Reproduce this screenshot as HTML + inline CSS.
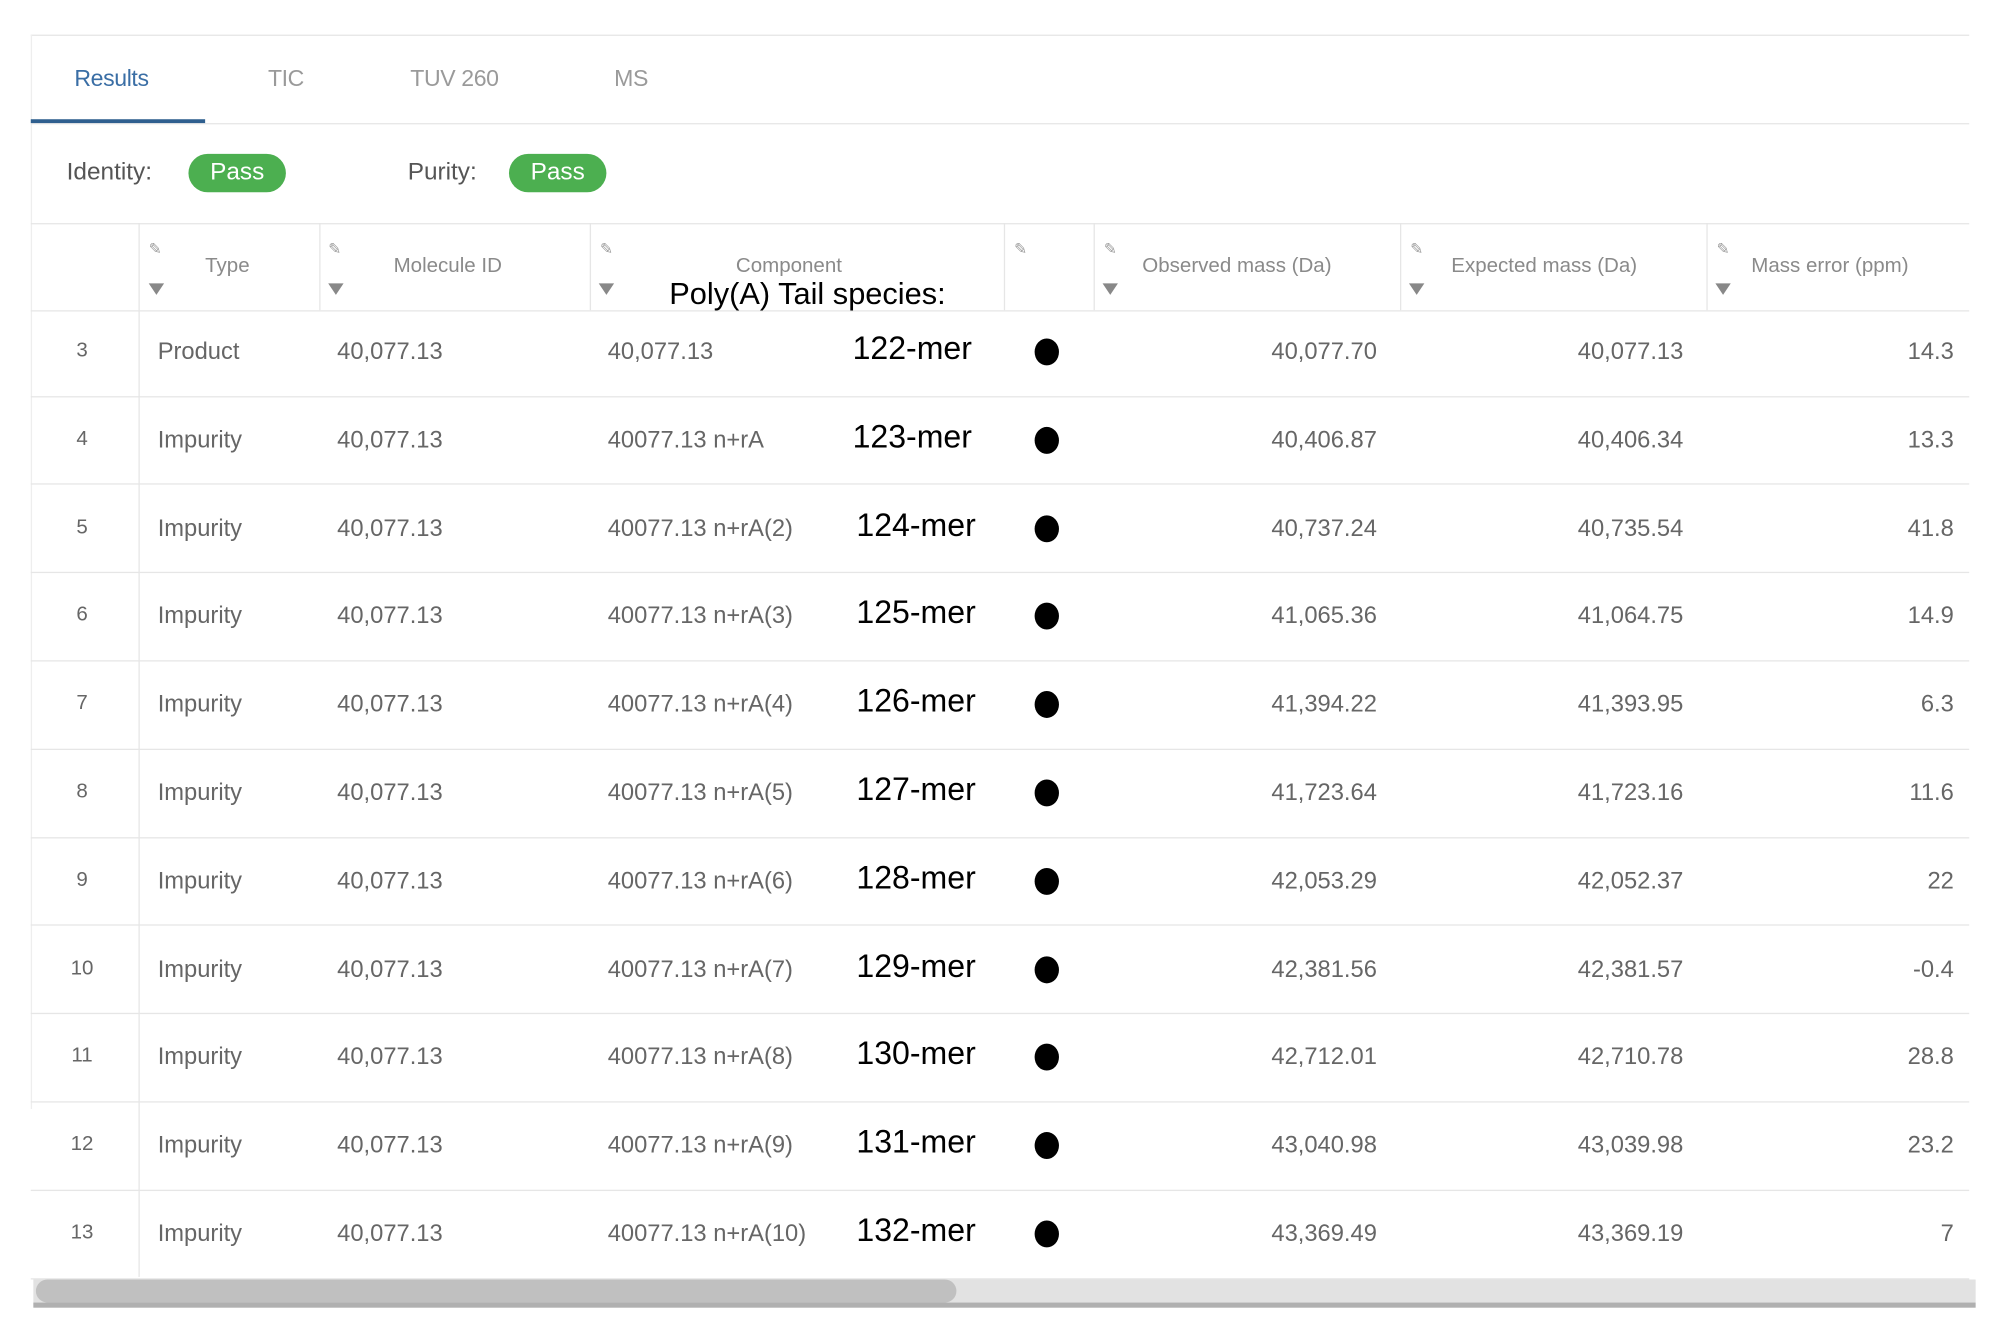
<!DOCTYPE html>
<html><head><meta charset="utf-8">
<style>
html,body{margin:0;padding:0;background:#fff;width:2000px;height:1333px;overflow:hidden}
#s{position:absolute;left:0;top:0;width:1560px;height:1040px;transform:scale(1.28205);transform-origin:0 0;font-family:"Liberation Sans",sans-serif}
.a{position:absolute;white-space:nowrap}
.hl{position:absolute;height:1px;background:#e6e6e6}
.vl{position:absolute;width:1px;background:#e6e6e6}
.tab{position:absolute;top:51px;font-size:18px;color:#9a9a9a;letter-spacing:-0.3px}
.pill{position:absolute;top:120px;width:76px;height:30px;border-radius:15px;background:#4caf50;color:#fff;font-size:19px;line-height:30px;text-align:center}
.lbl{position:absolute;top:124px;font-size:19px;color:#555}
.h{position:absolute;top:199px;font-size:16px;color:#8a8a8a}
.c{position:absolute;font-size:18.5px;color:#666;white-space:nowrap}
.r{text-align:right}
.m{position:absolute;font-size:25px;color:#000;font-family:"Liberation Sans",sans-serif}
.dot{position:absolute;width:19px;height:21px;border-radius:50%;background:#000}
.pin{position:absolute;width:10px;height:10px;color:#999;font-size:12px;line-height:10px}
.fil{position:absolute;width:0;height:0;border-left:6px solid transparent;border-right:6px solid transparent;border-top:9px solid #888}
</style></head><body><div id="s">
<div class="hl" style="left:24px;top:27px;width:1512px"></div>
<div class="vl" style="left:24px;top:27px;height:838px;background:#eee"></div>
<div class="tab" style="left:58px;color:#3a6ea5">Results</div>
<div class="tab" style="left:209px">TIC</div>
<div class="tab" style="left:320px">TUV 260</div>
<div class="tab" style="left:479px">MS</div>
<div class="hl" style="left:24px;top:96px;width:1512px"></div>
<div class="a" style="left:24px;top:93px;width:136px;height:3px;background:#2f5f8f"></div>
<div class="lbl" style="left:52px">Identity:</div>
<div class="pill" style="left:147px">Pass</div>
<div class="lbl" style="left:318px">Purity:</div>
<div class="pill" style="left:397px">Pass</div>
<div class="hl" style="left:24px;top:174px;width:1512px"></div>
<div class="hl" style="left:24px;top:242px;width:1512px"></div>
<div class="vl" style="left:108px;top:174px;height:822px"></div>
<div class="vl" style="left:249px;top:174px;height:68px"></div>
<div class="vl" style="left:460px;top:174px;height:68px"></div>
<div class="vl" style="left:783px;top:174px;height:68px"></div>
<div class="vl" style="left:853px;top:174px;height:68px"></div>
<div class="vl" style="left:1092px;top:174px;height:68px"></div>
<div class="vl" style="left:1331px;top:174px;height:68px"></div>
<div class="pin" style="left:116px;top:189px">✎</div><div class="fil" style="left:116px;top:221px"></div>
<div class="pin" style="left:256px;top:189px">✎</div><div class="fil" style="left:256px;top:221px"></div>
<div class="pin" style="left:468px;top:189px">✎</div><div class="fil" style="left:467px;top:221px"></div>
<div class="pin" style="left:791px;top:189px">✎</div>
<div class="pin" style="left:861px;top:189px">✎</div><div class="fil" style="left:860px;top:221px"></div>
<div class="pin" style="left:1100px;top:189px">✎</div><div class="fil" style="left:1099px;top:221px"></div>
<div class="pin" style="left:1339px;top:189px">✎</div><div class="fil" style="left:1338px;top:221px"></div>
<div class="h" style="left:160px">Type</div>
<div class="h" style="left:307px">Molecule ID</div>
<div class="h" style="left:574px">Component</div>
<div class="h" style="left:891px">Observed mass (Da)</div>
<div class="h" style="left:1132px">Expected mass (Da)</div>
<div class="h" style="left:1366px">Mass error (ppm)</div>
<div class="a" style="left:522px;top:216px;font-size:24px;color:#000">Poly(A) Tail species:</div>
<div id="rows"></div>
<div class="a" style="left:26px;top:998px;width:1515px;height:18px;background:#e2e2e2"></div>
<div class="a" style="left:28px;top:998px;width:718px;height:18px;border-radius:9px;background:#c0c0c0"></div>
<div class="a" style="left:26px;top:1016px;width:1515px;height:4px;background:#b0b0b0"></div>
</div>
<script>
var d=[["3","Product","40,077.13","122","40,077.70","40,077.13","14.3"],
["4","Impurity","40077.13 n+rA","123","40,406.87","40,406.34","13.3"],
["5","Impurity","40077.13 n+rA(2)","124","40,737.24","40,735.54","41.8"],
["6","Impurity","40077.13 n+rA(3)","125","41,065.36","41,064.75","14.9"],
["7","Impurity","40077.13 n+rA(4)","126","41,394.22","41,393.95","6.3"],
["8","Impurity","40077.13 n+rA(5)","127","41,723.64","41,723.16","11.6"],
["9","Impurity","40077.13 n+rA(6)","128","42,053.29","42,052.37","22"],
["10","Impurity","40077.13 n+rA(7)","129","42,381.56","42,381.57","-0.4"],
["11","Impurity","40077.13 n+rA(8)","130","42,712.01","42,710.78","28.8"],
["12","Impurity","40077.13 n+rA(9)","131","43,040.98","43,039.98","23.2"],
["13","Impurity","40077.13 n+rA(10)","132","43,369.49","43,369.19","7"]];
var h="";
for(var i=0;i<d.length;i++){var r=d[i];var cy=274+i*68.8;var t=cy-11;
h+='<div class="c" style="left:44px;width:40px;text-align:center;top:'+(t+2)+'px;font-size:16px">'+r[0]+'</div>';
h+='<div class="c" style="left:123px;top:'+t+'px">'+r[1]+'</div>';
h+='<div class="c" style="left:263px;top:'+t+'px">40,077.13</div>';
h+='<div class="c" style="left:474px;top:'+t+'px">'+r[2]+'</div>';
h+='<div class="m" style="left:'+(i<2?665:668)+'px;top:'+(cy-16)+'px">'+r[3]+'-mer</div>';
h+='<div class="dot" style="left:807px;top:'+(cy-10)+'px"></div>';
h+='<div class="c r" style="left:900px;width:174px;top:'+t+'px">'+r[4]+'</div>';
h+='<div class="c r" style="left:1140px;width:173px;top:'+t+'px">'+r[5]+'</div>';
h+='<div class="c r" style="left:1400px;width:124px;top:'+t+'px">'+r[6]+'</div>';
h+='<div class="hl" style="left:24px;width:1512px;top:'+Math.round(cy+34.5)+'px"></div>';}
document.getElementById("rows").innerHTML=h;
</script>
</body></html>
